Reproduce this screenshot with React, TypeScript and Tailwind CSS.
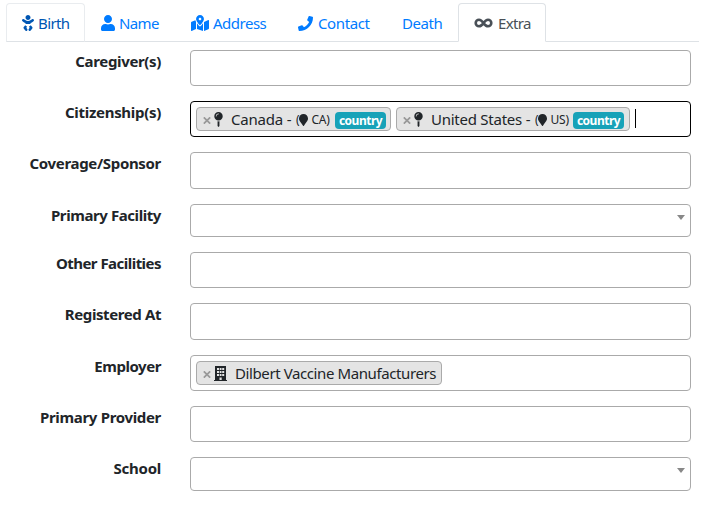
import type { ReactNode } from "react";
import { FaBaby, FaUser, FaMapMarkedAlt, FaPhone, FaMapPin, FaMapMarker } from "react-icons/fa";

function InfinityIcon() {
  return (
    <svg className="mr-[5px] h-[10px] w-[19px] shrink-0" viewBox="0 0 19 10" fill="none" stroke="currentColor" strokeWidth="2.6">
      <path d="M9.5 5C8.2 3.100 6.900 1.700 5 1.700a3.300 3.300 0 0 0 0 6.600C6.900 8.300 8.200 6.900 9.500 5s2.600-3.300 4.500-3.300a3.300 3.300 0 0 1 0 6.600c-1.900 0-3.200-1.400-4.500-3.300z" />
    </svg>
  );
}

function BuildingIcon() {
  return (
    <svg className="ml-px h-[15px] w-[13px] shrink-0" viewBox="0 0 13 15" fill="currentColor">
      <path fillRule="evenodd" d="M1 0h11v14h1v1H0v-1h1zM3 2v2h2V2zm2.700 0v2h1.800V2zM8.200 2v2h2V2zM3 5v2h2V5zm2.700 0v2h1.800V5zm2.500 0v2h2V5zM3 8v2h2V8zm2.700 0v2h1.800V8zm2.500 0v2h2V8zM5.500 11.500V14h2.200v-2.500z" />
    </svg>
  );
}

function Tab({ className, icon, children }: { className: string; icon?: ReactNode; children: ReactNode }) {
  return (
    <div className={`flex h-[39px] shrink-0 items-center rounded-t border pl-[15px] pt-px text-[15px] whitespace-nowrap ${className}`}>
      {icon}
      {children}
    </div>
  );
}

function Row({ label, spacing, className = "h-9", arrow, children }: {
  label: string; spacing: string; className?: string; arrow?: boolean; children?: ReactNode;
}) {
  return (
    <div className="flex items-start">
      <div className={`mr-[29px] w-[161px] shrink-0 text-right text-[15px] leading-[22px] font-bold whitespace-nowrap ${spacing}`}>{label}</div>
      <div className={`flex w-[501px] items-start rounded border pl-[5px] pt-[5px] ${arrow ? "justify-end pr-[5px]" : ""} ${className.includes("border-black") ? "" : "border-[#aaa]"} ${className}`}>
        {children}
        {arrow && <span className="mt-[5px] h-0 w-0 border-x-4 border-t-[5px] border-x-transparent border-t-[#888]" />}
      </div>
    </div>
  );
}

function Chip({ className, children }: { className: string; children: ReactNode }) {
  return (
    <div className={`mr-[5px] flex h-6 shrink-0 items-center rounded border border-[#aaa] bg-[#e4e4e4] pl-[6px] text-[15px] whitespace-nowrap ${className}`}>
      <svg className="mt-[3px] mr-[2px] h-[7px] w-[8px] shrink-0" viewBox="0 0 8 7" stroke="#999" strokeWidth="1.7">
        <path d="M.8.3l6.4 6.4M7.2.3L.8 6.7" />
      </svg>
      {children}
    </div>
  );
}

function Country({ name, code, nameClass, codeClass }: { name: string; code: string; nameClass: string; codeClass: string }) {
  return (
    <>
      <FaMapPin className="ml-px h-[15px] w-[9px] shrink-0" />
      <span className={`ml-2 shrink-0 ${nameClass}`}>{name} -</span>
      <span className={`mt-0.5 flex shrink-0 items-center text-[12px] ${codeClass}`}>
        (<FaMapMarker className="h-3 w-[9px] shrink-0" /><span className="ml-[3px]">{code})</span>
      </span>
      <span className="mt-0.5 flex h-[17px] w-[51px] shrink-0 items-center justify-center rounded bg-[#17a2b8] pt-px text-[12px] leading-none font-bold tracking-[-0.5px] text-white">country</span>
    </>
  );
}

export default function App() {
  return (
    <div className="h-[507px] w-[702px] overflow-hidden bg-white pt-[3px] font-['Noto_Sans','Open_Sans',sans-serif] text-[#212529]">
      <div className="ml-1.5 flex h-[39px] w-[693px] border-b border-[#dee2e6] text-[#007bff]">
        <Tab className="w-[79px] border-[#e9ecef] border-b-[#dee2e6] text-[#0056b3]" icon={<FaBaby className="mr-1 h-4 w-3" />}>
          <span className="tracking-[-0.6px]">Birth</span>
        </Tab>
        <Tab className="w-[90px] border-transparent" icon={<FaUser className="mr-1 h-4 w-3.5" />}>
          <span className="tracking-[-0.6px]">Name</span>
        </Tab>
        <Tab className="w-[107px] border-transparent" icon={<FaMapMarkedAlt className="mr-1 h-4 w-[18px]" />}>
          <span className="tracking-[-0.5px]">Address</span>
        </Tab>
        <Tab className="w-[104px] border-transparent" icon={<FaPhone className="mr-[5px] h-[15px] w-[15px]" />}>
          <span className="tracking-[-0.4px]">Contact</span>
        </Tab>
        <Tab className="w-[72px] border-transparent">
          <span className="tracking-[-0.45px]">Death</span>
        </Tab>
        <Tab className="w-[88px] border-[#dee2e6] border-b-white bg-white text-[#495057]" icon={<InfinityIcon />}>
          <span className="tracking-[-0.65px]">Extra</span>
        </Tab>
      </div>
      <div className="mt-2 flex flex-col gap-[15px]">
        <Row label="Caregiver(s)" spacing="tracking-[-0.35px]" />
        <Row label="Citizenship(s)" spacing="tracking-[-0.3px]" className="h-9 border-black">
          <Chip className="w-[195px]">
            <Country name="Canada" code="CA" nameClass="w-[65px] tracking-[-0.2px]" codeClass="w-[39px] tracking-[-0.2px]" />
          </Chip>
          <Chip className="w-[234px]">
            <Country name="United States" code="US" nameClass="w-[104px] tracking-[-0.25px]" codeClass="w-[38px] tracking-[-0.2px]" />
          </Chip>
          <span className="mt-0.5 h-[19px] w-px bg-black" />
        </Row>
        <Row label="Coverage/Sponsor" spacing="tracking-[-0.33px]" className="h-[37px]" />
        <Row label="Primary Facility" spacing="tracking-[-0.42px]" className="h-[33px]" arrow />
        <Row label="Other Facilities" spacing="tracking-[-0.53px]" />
        <Row label="Registered At" spacing="tracking-[-0.4px]" className="h-[37px]" />
        <Row label="Employer" spacing="tracking-[-0.45px]">
          <Chip className="w-[246px]">
            <BuildingIcon />
            <span className="ml-2 tracking-[-0.4px]">Dilbert Vaccine Manufacturers</span>
          </Chip>
        </Row>
        <Row label="Primary Provider" spacing="tracking-[-0.33px]" />
        <Row label="School" spacing="tracking-[-0.25px]" className="h-[34px]" arrow />
      </div>
    </div>
  );
}
